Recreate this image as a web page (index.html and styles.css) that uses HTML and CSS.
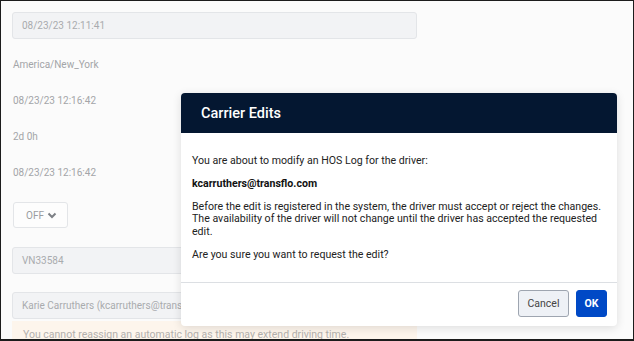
FILE: index.html
```html
<!DOCTYPE html>
<html lang="en">
<head>
  <meta charset="UTF-8" />
  <meta name="viewport" content="width=device-width, initial-scale=1.0"/>
  <title>Carrier Edits</title>
  <link rel="stylesheet" href="styles.css">
</head>
<body>

  <div class="frame">
    <!-- log form behind the dialog -->
    <div class="form">
      <div class="input first">08/23/23 12:11:41</div>
      <div class="value">America/New_York</div>
      <div class="value">08/23/23 12:16:42</div>
      <div class="value">2d 0h</div>
      <div class="value">08/23/23 12:16:42</div>
      <div class="select">
        <span>OFF</span>
        <svg width="10" height="7" viewBox="0 0 10 7"><path d="M1.5 1.5 L5 5 L8.5 1.5" fill="none" stroke="#7d8086" stroke-width="2"/></svg>
      </div>
      <div class="input vehicle">VN33584</div>
      <div class="input driver">Karie Carruthers (kcarruthers@transflo.com)</div>
      <div class="warning">You cannot reassign an automatic log as this may extend driving time.</div>
    </div>

    <div class="modal">
      <div class="modal-header">Carrier Edits</div>
      <div class="modal-body">
        <p>You are about to modify an HOS Log for the driver:</p>
        <p class="email">kcarruthers@transflo.com</p>
        <p>Before the edit is registered in the system, the driver must accept or reject the changes. The availability of the driver will not change until the driver has accepted the requested edit.</p>
        <p>Are you sure you want to request the edit?</p>
      </div>
      <div class="modal-footer">
        <button class="btn cancel">Cancel</button>
        <button class="btn ok">OK</button>
      </div>
    </div>
  </div>

</body>
</html>
```

FILE: styles.css
```css
body {
  margin: 0;
  font-family: Roboto, 'Liberation Sans', sans-serif;
  background-color: #fff;
}

.frame {
  position: relative;
  width: 632px;
  height: 338px;
  border: 1px solid #1c1c1c;
  border-bottom-width: 2px;
  background-color: #fbfbfb;
  overflow: hidden;
}

.form {
  padding: 11px 0 0 11px;
  width: 405px;
  color: #a3a5a8;
  font-size: 10px;
}

.input {
  box-sizing: border-box;
  height: 27px;
  padding-left: 9px;
  display: flex;
  align-items: center;
  background-color: #f2f3f5;
  border: 1px solid #e3e5e8;
  border-radius: 3px;
  color: #a9abae;
  white-space: nowrap;
  overflow: hidden;
}

.first {
  margin-bottom: 7px;
}

.value {
  height: 36px;
  display: flex;
  align-items: center;
  padding-left: 1px;
}

.select {
  box-sizing: border-box;
  width: 55px;
  height: 26px;
  margin: 12px 0 0 1px;
  padding: 0 10px 0 12px;
  display: flex;
  align-items: center;
  justify-content: space-between;
  background-color: #fdfdfd;
  border: 1px solid #e3e5e8;
  border-radius: 3px;
  color: #9a9ca0;
}

.vehicle {
  margin-top: 19px;
}

.driver {
  margin-top: 18px;
}

.warning {
  margin-top: 2px;
  height: 30px;
  padding: 7px 0 0 11px;
  box-sizing: border-box;
  background-color: #fdf5ec;
  color: #b3b0ad;
  font-size: 10.5px;
  white-space: nowrap;
}

.modal {
  position: absolute;
  left: 180px;
  top: 92px;
  width: 436px;
  background-color: #fff;
  border-radius: 4px;
  box-shadow: 0 2px 10px rgba(0, 0, 0, 0.12);
  overflow: hidden;
}

.modal-header {
  height: 40px;
  padding-left: 20px;
  display: flex;
  align-items: center;
  background-color: #041731;
  color: #fff;
  font-size: 14.5px;
  font-weight: 500;
}

.modal-body {
  padding: 21.5px 11px 10px 11px;
  border-bottom: 1px solid #dcdfe3;
  font-size: 10.6px;
  line-height: 12.5px;
  color: #222;
}

.modal-body p {
  margin: 0 0 10.5px;
}

.email {
  font-weight: 700;
  color: #111;
}

.modal-footer {
  display: flex;
  justify-content: flex-end;
  gap: 7px;
  padding: 7px 10px 9px;
}

.btn {
  height: 27px;
  border-radius: 3px;
  font-family: inherit;
  font-size: 10.5px;
  cursor: pointer;
}

.cancel {
  width: 51px;
  background-color: #eef1f6;
  border: 1px solid #9ea5b0;
  color: #444;
}

.ok {
  width: 31px;
  background-color: #0049c6;
  border: 1px solid #0049c6;
  color: #fff;
  font-weight: 700;
}
```
